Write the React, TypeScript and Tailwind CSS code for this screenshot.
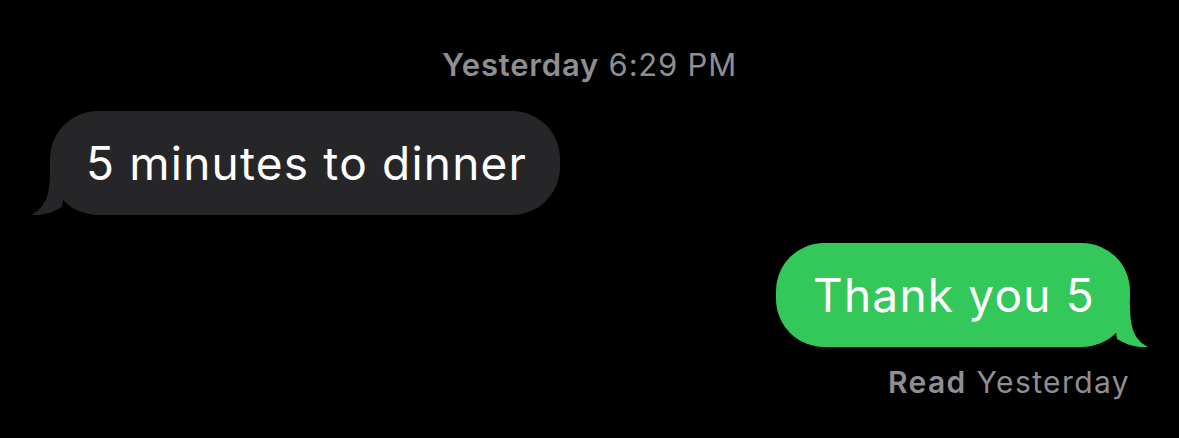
import React from 'react';

const App: React.FC = () => {
  return (
    <div
      className="h-[438px] w-[1179px] bg-black flex flex-col"
      style={{ fontFamily: 'Inter, "Noto Sans", sans-serif' }}
    >
      {/* Timestamp */}
      <div className="pt-[46px] text-center text-[31px] leading-[38px] tracking-[0.8px] text-[#8e8e93]">
        <span className="font-semibold">Yesterday</span> <span>6:29 PM</span>
      </div>

      {/* Incoming bubble */}
      <div className="mt-[27px] pl-[50px] flex">
        <div className="relative h-[104px] rounded-[48px] bg-[#262628] pl-[36px] pr-[33px] flex items-center">
          <svg className="absolute left-[-19px] bottom-0" width="36" height="42" viewBox="0 0 36 42">
            <path d="M19 0 C19 22 14 35 0 42 C11 43 21 40 31 34 L36 0 Z" fill="#262628" />
          </svg>
          <span className="relative text-[46px] text-white tracking-[1.2px]">5 minutes to dinner</span>
        </div>
      </div>

      {/* Outgoing bubble */}
      <div className="mt-[28px] pr-[49px] flex justify-end">
        <div className="relative h-[104px] rounded-[48px] bg-[#34c759] pl-[37px] pr-[35px] flex items-center">
          <svg className="absolute right-[-18px] bottom-0" width="36" height="42" viewBox="0 0 36 42">
            <path d="M18 0 C18 22 22 35 36 42 C25 43 15 40 5 34 L0 0 Z" fill="#34c759" />
          </svg>
          <span className="relative text-[46px] text-white tracking-[1.2px]">Thank you 5</span>
        </div>
      </div>

      {/* Read receipt */}
      <div className="mt-[17px] pr-[49px] text-right text-[30px] leading-[36px] tracking-[1.4px] text-[#8e8e93]">
        <span className="font-semibold">Read</span> <span>Yesterday</span>
      </div>
    </div>
  );
};

export default App;
